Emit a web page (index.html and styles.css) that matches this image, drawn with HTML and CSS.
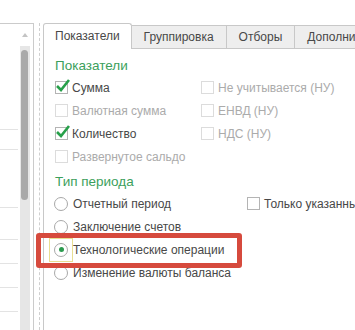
FILE: index.html
```html
<!DOCTYPE html>
<html>

	<head>
		<meta charset="utf-8" />
		<title>Настройки отчета</title>
		<link rel="stylesheet" href="styles.css">
	</head>

	<body>
		<div class="window">
			<div class="list">
				<div class="rows">
					<div class="row row_first"></div>
					<div class="row row_20"></div>
					<div class="row row_58"></div>
					<div class="row row_32"></div>
					<div class="row"></div>
					<div class="row"></div>
					<div class="row"></div>
				</div>
				<div class="scroll">
					<div class="scroll_up"></div>
					<div class="scroll_track">
						<div class="scroll_thumb"></div>
					</div>
				</div>
			</div>
			<div class="splitter"></div>
			<div class="panel">
				<ul class="tabs">
					<li class="tab tab_active">Показатели</li>
					<li class="tab">Группировка</li>
					<li class="tab">Отборы</li>
					<li class="tab">Дополнительные поля</li>
					<li class="tab_rest"></li>
				</ul>
				<div class="page">
					<div class="group_title">Показатели</div>
					<div class="checks">
						<label class="check"><span class="box box_on"><svg width="16" height="15" viewBox="0 0 16 15"><polyline points="2,8 6,12 14,2" /></svg></span>Сумма</label>
						<label class="check check_off"><span class="box"></span>Не учитывается (НУ)</label>
						<label class="check check_off"><span class="box"></span>Валютная сумма</label>
						<label class="check check_off"><span class="box"></span>ЕНВД (НУ)</label>
						<label class="check"><span class="box box_on"><svg width="16" height="15" viewBox="0 0 16 15"><polyline points="2,8 6,12 14,2" /></svg></span>Количество</label>
						<label class="check check_off"><span class="box"></span>НДС (НУ)</label>
						<label class="check check_off"><span class="box"></span>Развернутое сальдо</label>
					</div>
					<div class="group_title group_second">Тип периода</div>
					<div class="period">
						<div class="radios">
							<label class="radio"><span class="radio_wrap"><span class="circle"></span></span>Отчетный период</label>
							<label class="radio"><span class="radio_wrap"><span class="circle"></span></span>Заключение счетов</label>
							<label class="radio"><span class="radio_wrap radio_focus"><span class="circle circle_on"></span></span>Технологические операции</label>
							<label class="radio"><span class="radio_wrap"><span class="circle"></span></span>Изменение валюты баланса</label>
						</div>
						<label class="check"><span class="box"></span>Только указанные</label>
					</div>
				</div>
			</div>
			<div class="highlight"></div>
		</div>
	</body>

</html>
```
FILE: styles.css
```css
* {
	margin: 0;
	padding: 0;
	box-sizing: border-box;
}

body {
	width: 355px;
	height: 330px;
	overflow: hidden;
	background: #fff;
	font-family: "Liberation Sans", Arial, sans-serif;
	font-size: 12px;
	color: #484848;
}

li {
	list-style: none;
}

.window {
	position: relative;
	display: flex;
	height: 330px;
	padding-top: 23px;
}

/* левая таблица */
.list {
	display: flex;
	width: 34px;
	flex-shrink: 0;
	border-top: 1px solid #cbcbcb;
	border-right: 1px solid #cbcbcb;
}

.rows {
	width: 18px;
}

.row {
	height: 24px;
	border-bottom: 1px solid #e3e3e3;
}

.row_first {
	height: 106px;
}

.row_20 {
	height: 20px;
}

.row_58 {
	height: 58px;
}

.row_32 {
	height: 32px;
}

.scroll {
	display: flex;
	flex-direction: column;
	width: 10px;
	margin-left: 2px;
}

.scroll_up {
	width: 0;
	height: 0;
	margin: 9px 0 0 2px;
	border-left: 3px solid transparent;
	border-right: 3px solid transparent;
	border-bottom: 4px solid #c4c4c4;
}

.scroll_track {
	flex: 1;
	margin-top: 9px;
	padding: 4px 1px 0 1px;
	background: #e6e6e6;
}

.scroll_thumb {
	width: 7px;
	height: 150px;
	border-radius: 4px;
	background: #a9a9a9;
}

.splitter {
	width: 4px;
	margin-left: 5px;
	flex-shrink: 0;
	border-left: 1px dashed #cfcfcf;
}

/* вкладки */
.panel {
	flex: 1;
	min-width: 0;
	overflow: hidden;
}

.tabs {
	display: flex;
	align-items: flex-end;
	height: 26px;
	white-space: nowrap;
}

.tab {
	height: 24px;
	line-height: 22px;
	padding: 0 12px;
	background: #eeeeee;
	border-top: 1px solid #c8c8c8;
	border-right: 1px solid #c8c8c8;
	border-bottom: 1px solid #c8c8c8;
}

.tab_active {
	height: 26px;
	line-height: 25px;
	padding: 0 11px;
	background: #fff;
	border-left: 1px solid #c8c8c8;
	border-bottom: none;
	border-radius: 3px 3px 0 0;
}

.tab_rest {
	flex: 1;
	border-bottom: 1px solid #c8c8c8;
}

.page {
	height: 281px;
	padding: 7px 0 0 11px;
	border-left: 1px solid #c8c8c8;
}

.group_title {
	height: 20px;
	line-height: 20px;
	font-size: 13.5px;
	color: #3c9f5c;
}

.group_second {
	margin-top: 4px;
}

.checks {
	display: grid;
	grid-template-columns: 146px auto;
	grid-auto-rows: 23px;
}

.check {
	display: flex;
	align-items: center;
	height: 23px;
	white-space: nowrap;
}

.check_off {
	color: #ababab;
}

.box {
	position: relative;
	width: 13px;
	height: 13px;
	margin-right: 4px;
	border: 1px solid #b4b4b4;
	background: #fff;
}

.check_off .box {
	border-color: #dcdcdc;
}

.box svg {
	position: absolute;
	left: -1px;
	top: -4px;
}

.box svg polyline {
	fill: none;
	stroke: #27a04a;
	stroke-width: 2.6;
}

/* тип периода */
.period {
	display: flex;
	align-items: flex-start;
}

.radios {
	width: 192px;
	margin-left: -6px;
	flex-shrink: 0;
}

.period .check {
	margin-left: 6px;
}

.radio {
	display: flex;
	align-items: center;
	height: 23px;
	white-space: nowrap;
}

.radio_wrap {
	display: flex;
	align-items: center;
	justify-content: center;
	width: 24px;
	height: 24px;
	flex-shrink: 0;
	border: 1px solid transparent;
}

.radio_focus {
	border-color: #e8de92;
}

.circle {
	display: flex;
	align-items: center;
	justify-content: center;
	width: 14px;
	height: 14px;
	border: 1px solid #a8a8a8;
	border-radius: 50%;
}

.circle_on::after {
	content: "";
	width: 5px;
	height: 5px;
	border-radius: 50%;
	background: #2b9a4f;
}

/* красная рамка поверх формы */
.highlight {
	position: absolute;
	left: 36px;
	top: 233px;
	width: 206px;
	height: 35px;
	border: 5px solid #d64a3d;
	border-radius: 3px;
}
```
